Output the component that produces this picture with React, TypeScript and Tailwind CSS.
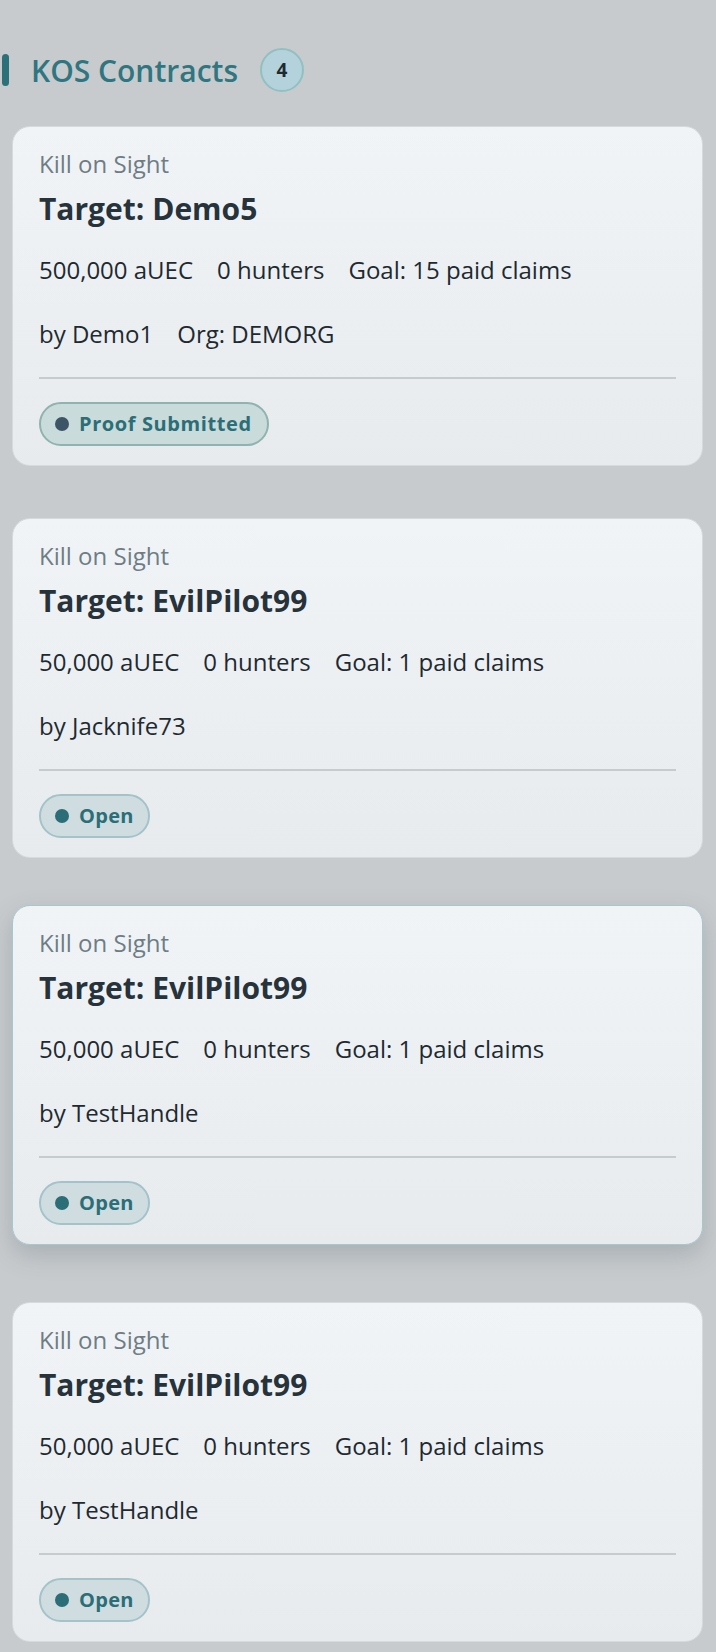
import React from "react";

type Contract = {
  target: string;
  amount: string;
  hunters: string;
  goal: string;
  by: string;
  org?: string;
  status: "proof" | "open";
  hover?: boolean;
};

const contracts: Contract[] = [
  { target: "Demo5", amount: "500,000 aUEC", hunters: "0 hunters", goal: "Goal: 15 paid claims", by: "by Demo1", org: "Org: DEMORG", status: "proof" },
  { target: "EvilPilot99", amount: "50,000 aUEC", hunters: "0 hunters", goal: "Goal: 1 paid claims", by: "by Jacknife73", status: "open" },
  { target: "EvilPilot99", amount: "50,000 aUEC", hunters: "0 hunters", goal: "Goal: 1 paid claims", by: "by TestHandle", status: "open", hover: true },
  { target: "EvilPilot99", amount: "50,000 aUEC", hunters: "0 hunters", goal: "Goal: 1 paid claims", by: "by TestHandle", status: "open" },
];

function Badge({ status }: { status: "proof" | "open" }) {
  if (status === "proof") {
    return (
      <div className="inline-flex h-[44px] items-center gap-[10px] rounded-full border-2 border-[#8fb3b0] bg-[#c9dbda] pl-[14px] pr-[15px]">
        <span className="h-[14px] w-[14px] rounded-full bg-[#3d5566]" />
        <span className="text-[20px] font-bold tracking-[0.6px] text-[#2b6e77]">Proof Submitted</span>
      </div>
    );
  }
  return (
    <div className="inline-flex h-[44px] items-center gap-[10px] rounded-full border-2 border-[#a3c3c9] bg-[#cfdde1] pl-[14px] pr-[14px]">
      <span className="h-[14px] w-[14px] rounded-full bg-[#2b6e77]" />
      <span className="text-[20px] font-bold tracking-[0.3px] text-[#2b6e77]">Open</span>
    </div>
  );
}

function Card({ c }: { c: Contract }) {
  return (
    <div
      className={
        c.hover
          ? "-translate-y-[5px] rounded-[18px] border border-[#a6c7cd] bg-gradient-to-b from-[#f1f4f7] to-[#e7ebee] px-[26px] pb-[19px] pt-[21px] shadow-[0_10px_24px_rgba(80,90,100,0.25)]"
          : "rounded-[18px] border border-[#d6dadd] bg-gradient-to-b from-[#f1f4f7] to-[#e7ebee] px-[26px] pb-[19px] pt-[21px]"
      }
    >
      <div className="text-[24px] leading-[32px] text-[#6e7d84]">Kill on Sight</div>
      <div className="mt-[11px] text-[30px] font-bold leading-[36px] text-[#27333b]">Target: {c.target}</div>
      <div className="mt-[27px] flex gap-[24px] text-[24px] leading-[32px] text-[#1e2a30]">
        <span>{c.amount}</span>
        <span>{c.hunters}</span>
        <span>{c.goal}</span>
      </div>
      <div className="mt-[32px] flex gap-[24px] text-[24px] leading-[32px] text-[#1e2a30]">
        <span>{c.by}</span>
        {c.org && <span>{c.org}</span>}
      </div>
      <div className="mt-[27px] h-[2px] bg-[#c6cbce]" />
      <div className="mt-[23px] flex">
        <Badge status={c.status} />
      </div>
    </div>
  );
}

export default function App() {
  return (
    <div className="min-h-[1652px] bg-[#c7cbce] pb-[12px] pl-[12px] pr-[13px] pt-[48px]" style={{ fontFamily: "'Open Sans', 'Noto Sans', sans-serif" }}>
      <div className="-ml-[10px] flex h-[44px] items-center">
        <span className="h-[32px] w-[7px] rounded-full bg-[#2c7079]" />
        <h1 className="ml-[22px] text-[30px] font-semibold text-[#2f7680]">KOS Contracts</h1>
        <span className="ml-[22px] flex h-[44px] w-[44px] items-center justify-center rounded-full border-2 border-[#92c0c0] bg-[#b3d2dc] text-[19px] font-bold text-[#1f2a30]">
          4
        </span>
      </div>
      <div className="mt-[34px] flex flex-col gap-[52px]">
        {contracts.map((c, i) => (
          <Card key={i} c={c} />
        ))}
      </div>
    </div>
  );
}
